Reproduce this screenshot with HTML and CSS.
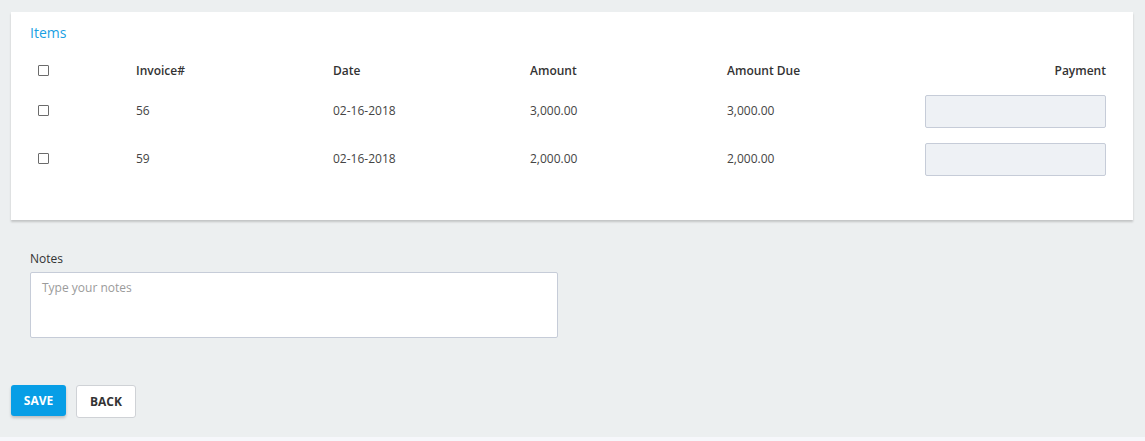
FILE: index.html
```html
<!DOCTYPE html>
<html>
<head>
<meta charset="utf-8">
<link rel="stylesheet" href="styles.css">
</head>
<body>
<div class="page">
  <div class="card">
    <div class="card-title">Items</div>
    <table class="items">
      <colgroup>
        <col class="c-check"><col class="c-col"><col class="c-col"><col class="c-col"><col class="c-col"><col class="c-pay">
      </colgroup>
      <thead>
        <tr>
          <th><span class="checkbox"></span></th>
          <th>Invoice#</th>
          <th>Date</th>
          <th>Amount</th>
          <th>Amount Due</th>
          <th class="right">Payment</th>
        </tr>
      </thead>
      <tbody>
        <tr>
          <td><span class="checkbox"></span></td>
          <td>56</td>
          <td>02-16-2018</td>
          <td>3,000.00</td>
          <td>3,000.00</td>
          <td class="right"><input class="pay-input" type="text"></td>
        </tr>
        <tr>
          <td><span class="checkbox"></span></td>
          <td>59</td>
          <td>02-16-2018</td>
          <td>2,000.00</td>
          <td>2,000.00</td>
          <td class="right"><input class="pay-input" type="text"></td>
        </tr>
      </tbody>
    </table>
  </div>
  <div class="notes">
    <label class="notes-label">Notes</label>
    <textarea class="notes-input" placeholder="Type your notes"></textarea>
  </div>
  <div class="actions">
    <button class="btn btn-primary">SAVE</button>
    <button class="btn btn-default">BACK</button>
  </div>
</div>
<div class="footer-strip"></div>
</body>
</html>
```
FILE: styles.css
```css
html, body {
  margin: 0;
  padding: 0;
}
body {
  font-family: "Open Sans", "Noto Sans", sans-serif;
  font-size: 12px;
  color: #444;
  background: #f6f7fb;
  width: 1145px;
  height: 441px;
  overflow: hidden;
}
.page {
  background: #eceff0;
  height: 437px;
  padding: 12px 12px 0 11px;
  box-sizing: border-box;
}
.card {
  background: #fff;
  box-shadow: 0 2px 2px rgba(0,0,0,0.18);
  height: 208px;
  box-sizing: border-box;
  padding: 13px 19px 0 19px;
}
.card-title {
  color: #1a9fe3;
  font-size: 14px;
  line-height: 16px;
  height: 16px;
  margin-bottom: 14px;
}
.items {
  width: 1084px;
  border-collapse: collapse;
  table-layout: fixed;
}
.c-check { width: 98px; }
.c-col { width: 197px; }
.c-pay { width: 198px; }
.items th {
  font-weight: 600;
  color: #333;
  text-align: left;
  padding: 0 8px;
  height: 32px;
  line-height: 16px;
  vertical-align: middle;
}
.items td {
  padding: 0 8px;
  height: 48px;
  line-height: 16px;
  vertical-align: middle;
  color: #444;
}
.items .right { text-align: right; }
.checkbox {
  display: inline-block;
  width: 9px;
  height: 9px;
  border: 1.5px solid #6b6b6b;
  border-radius: 1px;
  vertical-align: middle;
  position: relative;
  top: -1px;
}
.pay-input {
  display: block;
  margin-left: auto;
  width: 181px;
  height: 33px;
  box-sizing: border-box;
  background: #eef1f5;
  border: 1px solid #c6ccd8;
  border-radius: 2px;
  padding: 0;
}
.notes {
  padding: 30px 0 0 19px;
}
.notes-label {
  display: block;
  color: #333;
  line-height: 16px;
  margin-bottom: 6px;
  position: relative;
  top: 1px;
}
.notes-input {
  display: block;
  width: 528px;
  height: 66px;
  box-sizing: border-box;
  border: 1px solid #c6ccd8;
  border-radius: 2px;
  padding: 6px 11px;
  font-family: "Open Sans", "Noto Sans", sans-serif;
  font-size: 12px;
  resize: none;
  background: #fff;
}
.notes-input::placeholder {
  color: #9b9b9b;
}
.actions {
  display: flex;
  gap: 10px;
  padding-top: 47px;
  align-items: flex-start;
}
.btn {
  font-family: "Open Sans", "Noto Sans", sans-serif;
  font-size: 12px;
  font-weight: 700;
  border-radius: 3px;
  box-sizing: border-box;
  cursor: pointer;
  padding: 0;
}
.btn-primary {
  background: #079ee6;
  color: #fff;
  border: none;
  width: 55px;
  height: 31px;
  box-shadow: 0 2px 3px rgba(0,0,0,0.2);
}
.btn-default {
  background: #fff;
  color: #333;
  border: 1px solid #cfd2d6;
  width: 60px;
  height: 33px;
}
.footer-strip {
  height: 4px;
}
```
